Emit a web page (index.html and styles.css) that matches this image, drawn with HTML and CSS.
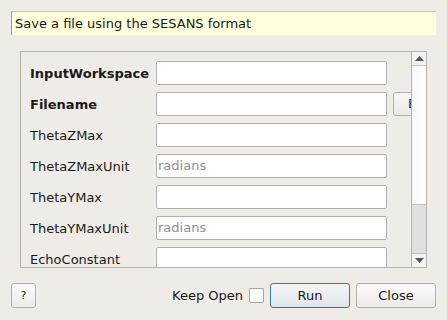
FILE: index.html
```html
<!DOCTYPE html>
<html>
<head>
<meta charset="utf-8">
<link rel="stylesheet" href="styles.css">
</head>
<body>
<div class="dialog">
  <div class="tip">Save a file using the SESANS format</div>
  <div class="scroll">
    <div class="content">
      <div class="row"><span class="lbl bold">InputWorkspace</span><span class="inp"></span></div>
      <div class="row"><span class="lbl bold">Filename</span><span class="inp"></span><span class="browse">Browse</span></div>
      <div class="row"><span class="lbl">ThetaZMax</span><span class="inp"></span></div>
      <div class="row"><span class="lbl">ThetaZMaxUnit</span><span class="inp ph">radians</span></div>
      <div class="row"><span class="lbl">ThetaYMax</span><span class="inp"></span></div>
      <div class="row"><span class="lbl">ThetaYMaxUnit</span><span class="inp ph">radians</span></div>
      <div class="row"><span class="lbl">EchoConstant</span><span class="inp"></span></div>
    </div>
    <div class="sbar">
      <div class="sbtn"><svg width="9" height="5" viewBox="0 0 9 5"><polygon points="0,5 9,5 4.5,0" fill="#555"/></svg></div>
      <div class="track"></div>
      <div class="handle"></div>
      <div class="sbtn down"><svg width="9" height="5" viewBox="0 0 9 5"><polygon points="0,0 9,0 4.5,5" fill="#555"/></svg></div>
    </div>
  </div>
  <div class="footer">
    <span class="btn help">?</span>
    <span class="spacer"></span>
    <span class="keep">Keep Open</span>
    <span class="check"></span>
    <span class="btn run">Run</span>
    <span class="btn close">Close</span>
  </div>
</div>
</body>
</html>
```
FILE: styles.css
```css
html, body {
  margin: 0;
  padding: 0;
  background: #efebe7;
}
body {
  width: 447px;
  height: 320px;
  overflow: hidden;
  font-family: "DejaVu Sans", sans-serif;
  font-size: 13px;
  color: #1a1a1a;
}
.dialog {
  display: flex;
  flex-direction: column;
}
.tip {
  margin: 11px 11px 0 11px;
  height: 23px;
  line-height: 23px;
  background: #ffffdc;
  border-top: 1px solid #c8c4b8;
  border-left: 1px solid #9c9890;
  padding-left: 3px;
  box-sizing: content-box;
  width: 421px;
}
.scroll {
  margin: 16px 0 0 20px;
  width: 405px;
  height: 215px;
  border: 1px solid #b6b2ae;
  display: flex;
  overflow: hidden;
}
.content {
  width: 391px;
  height: 215px;
  overflow: hidden;
  padding: 9px 0 0 9px;
  box-sizing: border-box;
  display: flex;
  flex-direction: column;
  gap: 7px;
}
.row {
  display: flex;
  align-items: center;
  height: 24px;
  flex: none;
}
.lbl {
  width: 126px;
  flex: none;
  white-space: nowrap;
}
.bold { font-weight: bold; }
.inp {
  width: 228px;
  height: 22px;
  border: 1px solid #b2aea9;
  border-radius: 2px;
  background: #fff;
  flex: none;
  line-height: 22px;
  padding-left: 1px;
  box-sizing: content-box;
}
.ph { color: #8f8f8f; }
.browse {
  margin-left: 6px;
  flex: none;
  width: 60px;
  height: 22px;
  line-height: 22px;
  border: 1px solid #b2aea9;
  border-radius: 3px;
  background: linear-gradient(#f9f8f7, #ebe8e5);
  padding-left: 14px;
  box-sizing: content-box;
}
.sbar {
  width: 14px;
  border-left: 1px solid #b6b2ae;
  display: flex;
  flex-direction: column;
  flex: none;
  background: #fbfbfa;
}
.sbtn {
  height: 13px;
  display: flex;
  align-items: center;
  justify-content: center;
  border-bottom: 1px solid #c4c0bc;
  background: #f4f2f0;
  flex: none;
}
.sbtn.down {
  border-bottom: none;
  border-top: 1px solid #c4c0bc;
}
.track {
  flex: 1;
  background: linear-gradient(90deg, #f7f6f5, #ffffff);
}
.handle {
  height: 48px;
  flex: none;
  border-top: 1px solid #c4c0bc;
  background: #e2e0dd;
}
.footer {
  display: flex;
  align-items: center;
  margin: 15px 11px 0 11px;
  height: 25px;
}
.spacer { flex: 1; }
.btn {
  height: 23px;
  line-height: 23px;
  border: 1px solid #b2aea9;
  border-radius: 3px;
  background: linear-gradient(#fbfafa, #eeebe8);
  text-align: center;
  flex: none;
  box-sizing: content-box;
}
.help {
  width: 23px;
  font-size: 11px;
}
.keep { margin-right: 6px; }
.check {
  width: 13px;
  height: 13px;
  border: 1px solid #a9a5a0;
  background: #fff;
  margin-right: 6px;
  border-radius: 1px;
}
.run {
  width: 78px;
  border-color: #3b78a8;
  background: linear-gradient(#f3f4f5, #e2e6ea);
  margin-right: 6px;
}
.close {
  width: 78px;
}
```
